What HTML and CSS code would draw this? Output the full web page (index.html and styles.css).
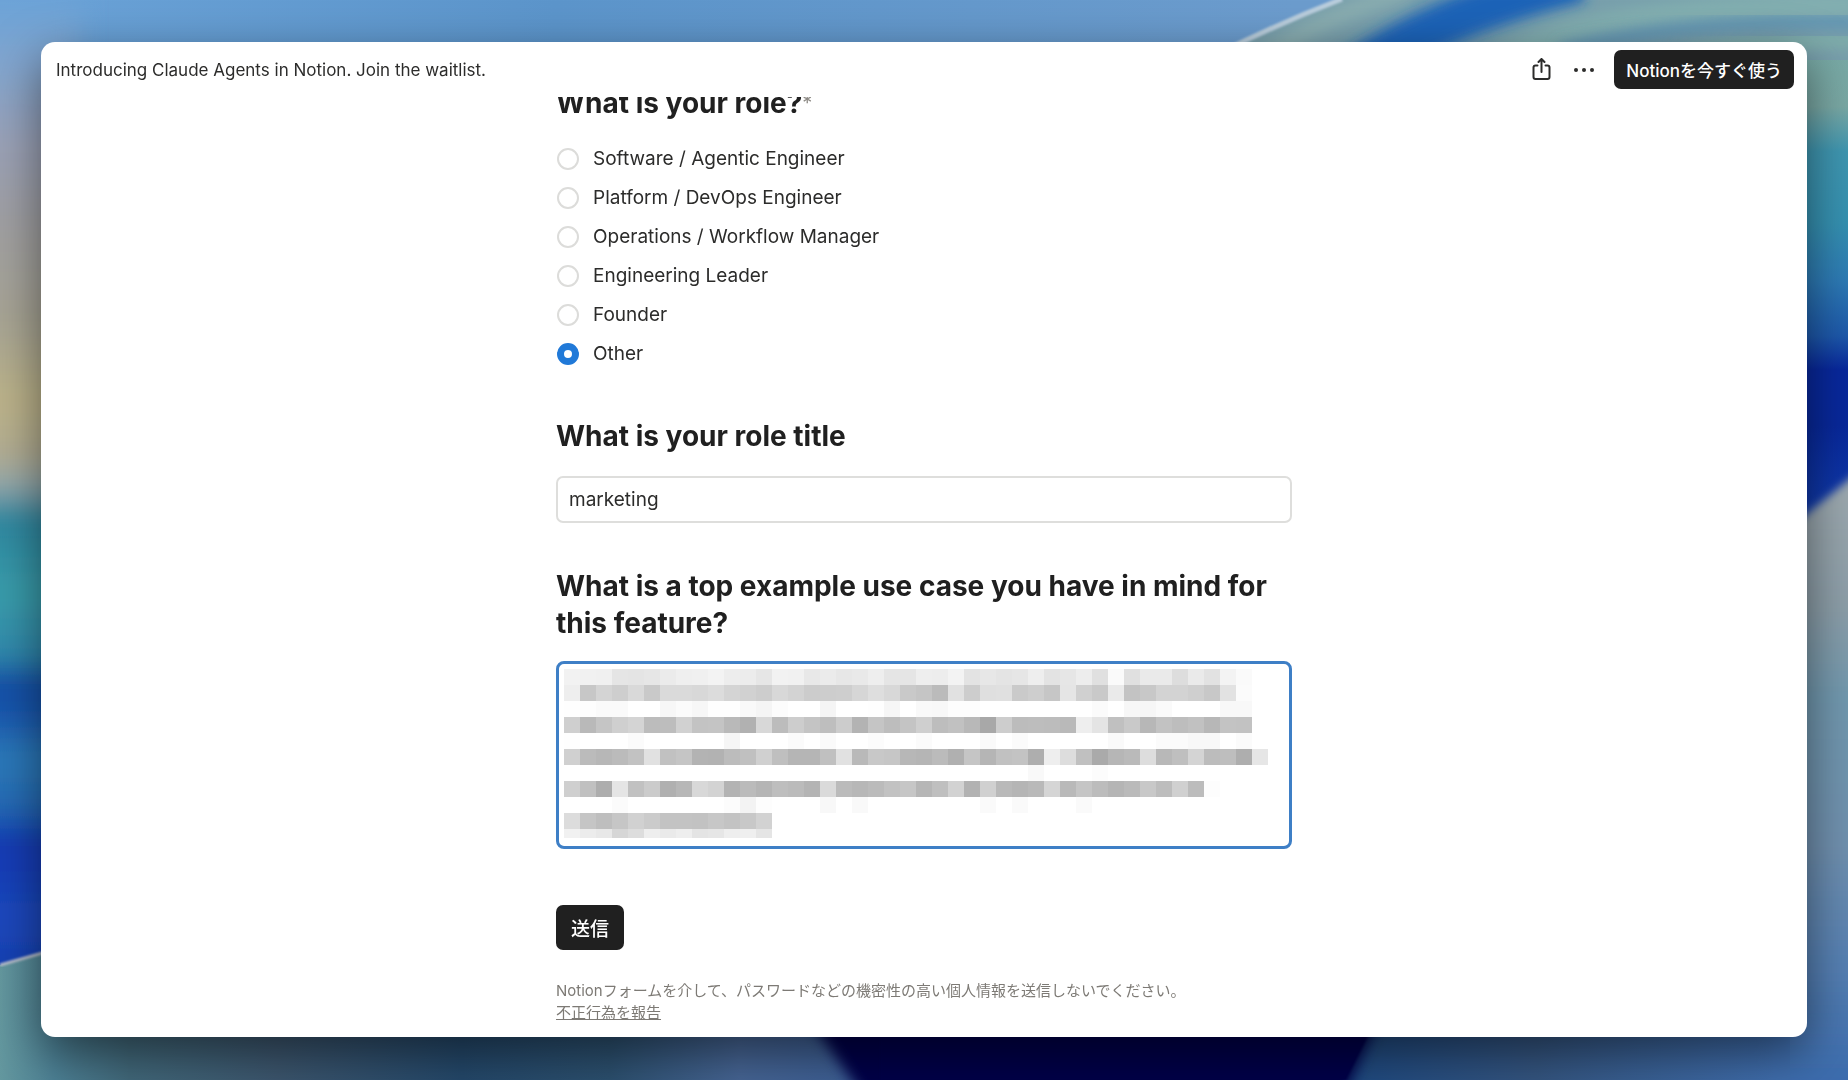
FILE: index.html
```html
<!DOCTYPE html>
<html lang="ja">
<head>
<meta charset="utf-8">
<title>Introducing Claude Agents in Notion. Join the waitlist.</title>
<link rel="stylesheet" href="styles.css">
</head>
<body>
<svg class="wallpaper" viewBox="0 0 1848 1080" preserveAspectRatio="none" aria-hidden="true">
  <defs>
    <linearGradient id="sky" x1="0" y1="0" x2="1" y2="0"><stop offset="0" stop-color="#6ba3d8"/><stop offset=".3" stop-color="#5c95cb"/><stop offset=".7" stop-color="#6c9ccd"/></linearGradient>
    <linearGradient id="left" gradientUnits="userSpaceOnUse" x1="0" y1="0" x2="0" y2="1080">
      <stop offset="0" stop-color="#6ba3d8"/><stop offset=".06" stop-color="#82a6cf"/><stop offset=".13" stop-color="#9aa2b8"/><stop offset=".2" stop-color="#a0a0a4"/><stop offset=".3" stop-color="#a8a594"/><stop offset=".37" stop-color="#bdb48a"/><stop offset=".42" stop-color="#b3ad92"/><stop offset=".45" stop-color="#94a9ad"/><stop offset=".48" stop-color="#2b86a0"/><stop offset=".55" stop-color="#3b9eac"/><stop offset=".61" stop-color="#2f87ac"/><stop offset=".63" stop-color="#124ba6"/><stop offset=".67" stop-color="#1c5cb0"/><stop offset=".7" stop-color="#2d7cba"/><stop offset=".75" stop-color="#2468b4"/><stop offset=".78" stop-color="#1038b4"/><stop offset=".85" stop-color="#1c49be"/><stop offset="1" stop-color="#0c2c98"/>
    </linearGradient>
    <linearGradient id="right" gradientUnits="userSpaceOnUse" x1="0" y1="0" x2="0" y2="560">
      <stop offset="0" stop-color="#7aacb4"/><stop offset=".04" stop-color="#5c90b4"/><stop offset=".08" stop-color="#78aaa6"/><stop offset=".19" stop-color="#7aa8a4"/><stop offset=".27" stop-color="#3f96b0"/><stop offset=".4" stop-color="#3590b0"/><stop offset=".5" stop-color="#2d7ab4"/><stop offset=".6" stop-color="#1d58aa"/><stop offset=".66" stop-color="#08289c"/><stop offset=".76" stop-color="#08289a"/><stop offset="1" stop-color="#1444b4"/>
    </linearGradient>
    <linearGradient id="stone" gradientUnits="userSpaceOnUse" x1="0" y1="490" x2="0" y2="1080">
      <stop offset="0" stop-color="#9ca8ae"/><stop offset=".2" stop-color="#8c9ea8"/><stop offset=".35" stop-color="#7198ae"/><stop offset=".6" stop-color="#7090ae"/><stop offset=".8" stop-color="#5680b2"/><stop offset="1" stop-color="#3c6cae"/>
    </linearGradient>
    <linearGradient id="floor" gradientUnits="userSpaceOnUse" x1="0" y1="0" x2="1848" y2="0">
      <stop offset="0" stop-color="#64989f"/><stop offset=".03" stop-color="#4c8094"/><stop offset=".07" stop-color="#41687a"/><stop offset=".15" stop-color="#3c566e"/><stop offset=".25" stop-color="#24486a"/><stop offset=".33" stop-color="#2c506f"/><stop offset=".4" stop-color="#466594"/><stop offset=".46" stop-color="#3c5e94"/><stop offset=".72" stop-color="#1c4880"/><stop offset=".83" stop-color="#345580"/><stop offset=".96" stop-color="#3f6dac"/><stop offset="1" stop-color="#3f6dac"/>
    </linearGradient>
    <filter id="soft" x="-20%" y="-20%" width="140%" height="140%"><feGaussianBlur stdDeviation="7"/></filter>
    <filter id="softer" x="-20%" y="-50%" width="140%" height="200%"><feGaussianBlur stdDeviation="12"/></filter>
    <filter id="edge"><feGaussianBlur stdDeviation="4"/></filter>
    <filter id="fine"><feGaussianBlur stdDeviation="1"/></filter>
    <clipPath id="dome"><path d="M1210 56C1255 34 1295 16 1340 0H1848V700H1210Z"/></clipPath>
  </defs>
  <rect width="1848" height="1080" fill="url(#sky)"/>
  <rect width="300" height="1080" x="-220" y="0" fill="url(#left)" filter="url(#softer)"/>
  <g clip-path="url(#dome)">
    <rect x="1200" width="648" height="700" fill="url(#right)"/>
    <path d="M1200 -10H1860V110H1200Z" fill="#789fac"/>
    <path d="M1240 75C1290 35 1350 8 1410 -10" stroke="#8aadb0" stroke-width="18" fill="none" filter="url(#soft)"/>
    <path d="M1350 75C1410 35 1480 5 1580 -20" stroke="#1c63b8" stroke-width="44" fill="none" filter="url(#soft)"/>
    <path d="M1500 60C1580 20 1680 8 1860 4" stroke="#82afb0" stroke-width="26" fill="none" filter="url(#soft)"/>
    <path d="M1560 50C1660 26 1750 20 1860 22" stroke="#5890b6" stroke-width="10" fill="none" filter="url(#soft)"/>
    <path d="M1680 56C1740 44 1800 40 1860 40" stroke="#80b0aa" stroke-width="14" fill="none" filter="url(#soft)"/>
    <path d="M1790 60H1860V560H1790Z" fill="url(#right)"/>
  </g>
  <path d="M1210 58C1255 35 1295 17 1342 -1" stroke="#b9cddd" stroke-width="5" fill="none" filter="url(#fine)"/>
  <path d="M1770 544L1900 438V1140H1770Z" fill="url(#stone)" filter="url(#edge)"/>
  <path d="M0 965L60 948V1020H1790V1080H0Z" fill="url(#floor)"/>
  <path d="M0 965L60 948" stroke="#b4bccb" stroke-width="3" filter="url(#fine)"/>
  <path d="M810 1020L866 1100H1342L1378 1020Z" fill="#000048" filter="url(#soft)"/>
  <path d="M880 1020H1376L1346 1080H880Z" fill="#000048" filter="url(#fine)"/>
</svg>

<div class="window">
  <header class="topbar">
    <span class="page-title">Introducing Claude Agents in Notion. Join the waitlist.</span>
    <div class="actions">
      <button class="icon-button" type="button" aria-label="共有">
        <svg width="24" height="24" viewBox="0 0 24 24" fill="none" stroke="#2c2c2b" stroke-width="2" stroke-linecap="round" stroke-linejoin="round"><path d="M7.500 7.500H5.500Q3.500 7.500 3.500 9.500V19Q3.500 21 5.500 21H17.500Q19.500 21 19.500 19V9.500Q19.500 7.500 17.500 7.500H15.500M11.500 14V1.500M8.500 4L11.500 1L14.500 4"/></svg>
      </button>
      <button class="icon-button" type="button" aria-label="その他">
        <svg width="24" height="24" viewBox="0 0 24 24" fill="#2c2c2b"><circle cx="4" cy="12" r="2"/><circle cx="12" cy="12" r="2"/><circle cx="20" cy="12" r="2"/></svg>
      </button>
      <button class="dark-button try-button" type="button">Notionを今すぐ使う</button>
    </div>
  </header>

  <main class="viewport">
    <form class="form">
      <fieldset class="question">
        <legend class="heading">What is your role?<span class="required">*</span></legend>
        <div class="options">
          <label class="option"><input type="radio" name="role">Software / Agentic Engineer</label>
          <label class="option"><input type="radio" name="role">Platform / DevOps Engineer</label>
          <label class="option"><input type="radio" name="role">Operations / Workflow Manager</label>
          <label class="option"><input type="radio" name="role">Engineering Leader</label>
          <label class="option"><input type="radio" name="role">Founder</label>
          <label class="option"><input type="radio" name="role" checked>Other</label>
        </div>
      </fieldset>

      <div class="question">
        <label class="heading" for="title">What is your role title</label>
        <input class="text-input" id="title" type="text" value="marketing">
      </div>

      <div class="question">
        <label class="heading" for="usecase">What is a top example use case you have in mind for this feature?</label>
        <div class="answer">
          <textarea class="text-area" id="usecase"></textarea>
          <svg class="mosaic" id="mosaic" width="704" height="169" shape-rendering="crispEdges" aria-hidden="true"></svg>
        </div>
      </div>

      <button class="dark-button submit" type="submit">送信</button>

      <footer class="note">
        <p>Notionフォームを介して、パスワードなどの機密性の高い個人情報を送信しないでください。</p>
        <a href="#">不正行為を報告</a>
      </footer>
    </form>
  </main>
</div>
<script src="mosaic.js"></script>
</body>
</html>
```

FILE: styles.css
```css
* {
  box-sizing: border-box;
}

body {
  margin: 0;
  min-height: 100vh;
  display: flex;
  padding: 42px 41px 43px;
  background: #24486a;
  color: #2c2c2b;
  font-family: Inter, "Noto Sans CJK JP", sans-serif;
  font-size: 19px;
}

button,
input,
textarea {
  font: inherit;
  color: inherit;
}

.wallpaper {
  position: fixed;
  inset: 0;
  width: 100%;
  height: 100%;
  z-index: -1;
}

.window {
  flex: 1;
  min-width: 0;
  display: flex;
  flex-direction: column;
  background: #fff;
  border-radius: 14px;
  box-shadow: 0 16px 48px rgba(0, 0, 0, 0.5);
  overflow: hidden;
}

.topbar {
  height: 55px;
  padding: 0 13px 0 15px;
  display: flex;
  align-items: center;
  justify-content: space-between;
}

.page-title {
  font-size: 17px;
}

.actions {
  display: flex;
  align-items: center;
  gap: 18px;
}

.icon-button {
  display: flex;
  padding: 0;
  border: 0;
  background: none;
}

.dark-button {
  border: 0;
  border-radius: 7px;
  background: #202020;
  color: #fff;
  font-weight: 500;
}

.try-button {
  height: 39px;
  padding: 0 12px;
  font-size: 17px;
}

.viewport {
  flex: 1;
  overflow: hidden;
  display: flex;
  flex-direction: column;
  align-items: center;
}

/* The form is scrolled slightly, so its first heading runs under the top bar. */
.form {
  width: 100%;
  max-width: 736px;
  margin-top: -12px;
  display: flex;
  flex-direction: column;
  align-items: flex-start;
}

.question {
  width: 100%;
  margin: 0 0 45px;
  padding: 0;
  border: 0;
}

.heading {
  display: block;
  padding: 0;
  font-size: 28px;
  font-weight: 700;
  line-height: 37px;
  color: #202020;
}

.required {
  display: inline-block;
  font-size: 20px;
  font-weight: 400;
  vertical-align: top;
  line-height: 36px;
  color: #8e8b86;
}

.options {
  display: flex;
  flex-direction: column;
  margin-top: 17px;
}

.option {
  display: flex;
  align-items: center;
  gap: 13px;
  height: 39px;
}

.option input {
  appearance: none;
  width: 22px;
  height: 22px;
  margin: 0 1px;
  border: 2px solid #dcdcda;
  border-radius: 50%;
  background: #fff;
}

.option input:checked {
  border: 7px solid #2079d8;
}

.text-input {
  display: block;
  width: 100%;
  height: 47px;
  margin-top: 21px;
  padding: 0 11px;
  border: 2px solid #dededc;
  border-radius: 7px;
  background: #fff;
}

.answer {
  position: relative;
  margin-top: 19px;
}

.text-area {
  display: block;
  width: 100%;
  height: 188px;
  padding: 8px 10px;
  border: 3px solid #3e7fc6;
  border-radius: 8px;
  background: #fff;
  resize: none;
}

.mosaic {
  position: absolute;
  top: 8px;
  left: 8px;
  pointer-events: none;
}

.submit {
  height: 45px;
  margin-top: 11px;
  padding: 0 15px;
}

.note {
  margin-top: 30px;
  font-size: 15px;
  line-height: 22px;
  color: #7d7a75;
}

.note p {
  margin: 0;
}

.note a {
  color: inherit;
}
```

FILE: mosaic.js
```js
// Pixelated redaction: one grey level (hex) for each 16px tile, row by row.
const rows = [
  "f2f1f0e5e4e6ebeff0f3edece6f2f1e8ebe7e9eee5e5eeedf3e3e7e4e6eee3e6ede0fae0eaeaddeae2f3fa",
  "eec7d4ced9c9dadad8dcd4d1cdd8d3cccdced6ded8c9c5bbe1cddfe0cacec6e5d0c9eac3c8d3d3cfc8e2fb",
  "fefdfafafffff7fbf7fefef9f5fcfffff5fffffef6fff9f8fdfdfffffffffffffffbfff7f6fafffffff8f8",
  "cfb9c5cfd4bcbdd1c3c4b9b1d8bccdc4beccb3c5bdc4cfbdc1b8a8cdbcbdbcb9eee4c0c9b7c2bdc1b7c3c2",
  "fefffffffbfffffffffff6fffffffbfffafffffcfffffbfffffffafffbfffffffffffafffffbfbf8f8fffb",
  "d0bbb7bbc2e1c1c5b3b2bcc0d0bfb5b5c0e1b9c8c6b7b5bbb0c5b5c1c3aeeeddc0aab6baddb8bfd4bcbeaee6",
  "fffffffffffffffffffffffffffffffffffffffffffffffffffffffffff9fffffffc",
  "cfc0ade5c1cbb0b7d8d3b3bbb5bebbb4dabbb7bbc2c6b6bfd2b2d0b9b5b9d5b9c5bcb5bac8bdd0bcfd",
  "fffffffbfffffffffffffcf3fdfffffff8fff9fffffffffffffffafffafffffffa",
  "dcc5bec6d1cbc3c3c2c7c3c8d2",
  "f1ece8d6ddeeeaeee4e6eeefe5"
];
const mosaic = document.getElementById("mosaic");
rows.forEach((row, y) => {
  row.match(/../g).forEach((level, x) => {
    const tile = document.createElementNS("http://www.w3.org/2000/svg", "rect");
    tile.setAttribute("x", x * 16);
    tile.setAttribute("y", y * 16);
    tile.setAttribute("width", 16);
    tile.setAttribute("height", 16);
    tile.setAttribute("fill", "#" + level + level + level);
    mosaic.append(tile);
  });
});
```
